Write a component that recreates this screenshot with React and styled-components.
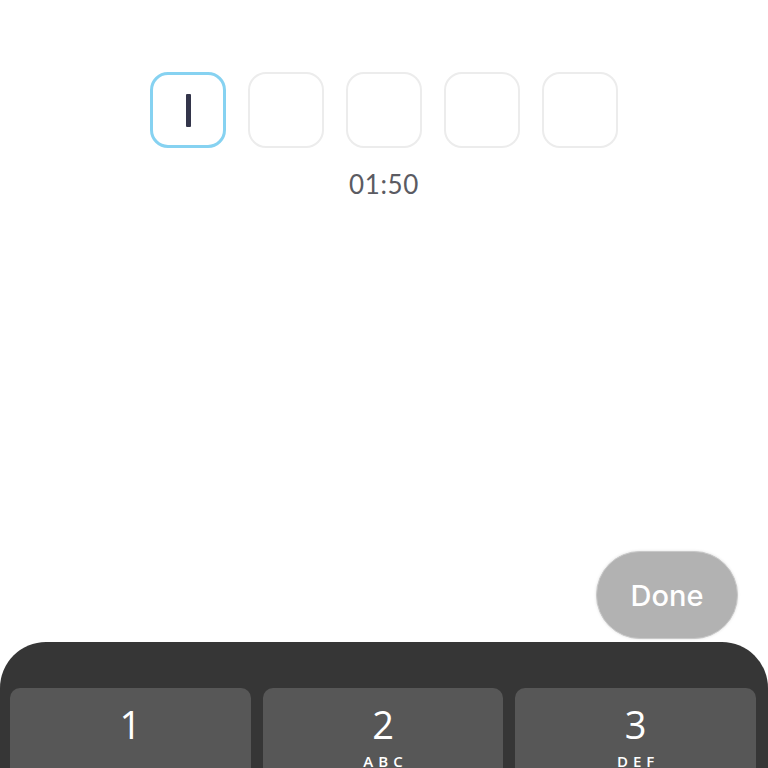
import React from 'react';
import styled, { createGlobalStyle } from 'styled-components';

const GlobalStyle = createGlobalStyle`
  html, body {
    margin: 0;
    padding: 0;
    background: #ffffff;
  }
  body {
    font-family: "Open Sans", "Liberation Sans", sans-serif;
  }
`;

const Screen = styled.div`
  width: 768px;
  height: 768px;
  overflow: hidden;
  display: flex;
  flex-direction: column;
  background: #ffffff;
`;

const CodeArea = styled.div`
  display: flex;
  flex-direction: column;
  align-items: center;
  padding-top: 72px;
  flex: 1;
`;

const CodeRow = styled.div`
  display: flex;
  gap: 22px;
`;

const CodeBox = styled.div`
  width: 76px;
  height: 76px;
  box-sizing: border-box;
  border-radius: 18px;
  border: ${p => (p.$active ? '3px solid #86d2f1' : '2.5px solid #ececec')};
  display: flex;
  align-items: center;
  justify-content: center;
`;

const Caret = styled.div`
  width: 5px;
  height: 33px;
  border-radius: 1px;
  background: #33354a;
`;

const Timer = styled.div`
  margin-top: 20px;
  font-family: "Lato", "Open Sans", sans-serif;
  font-size: 26px;
  color: #5b5b62;
  letter-spacing: 0.6px;
`;

const Accessory = styled.div`
  display: flex;
  justify-content: flex-end;
  padding: 0 30px 3px 0;
`;

const DoneButton = styled.button`
  width: 142px;
  height: 88px;
  border-radius: 44px;
  border: 1.5px solid #c8c8c8;
  background: #b2b2b2;
  color: #ffffff;
  font-family: "Inter", "Open Sans", sans-serif;
  font-size: 29px;
  font-weight: 500;
  padding: 0;
  box-shadow: 0 0 3px rgba(0, 0, 0, 0.12);
`;

const Keyboard = styled.div`
  height: 126px;
  background: #363636;
  border-radius: 46px 46px 0 0;
  padding: 46px 12px 0 10px;
  box-sizing: border-box;
  display: grid;
  grid-template-columns: repeat(3, 1fr);
  gap: 12px;
`;

const Key = styled.div`
  height: 100px;
  background: #575757;
  border-radius: 10px;
  display: flex;
  flex-direction: column;
  align-items: center;
  color: #ffffff;
`;

const Digit = styled.span`
  font-family: "Open Sans", "Liberation Sans", sans-serif;
  font-size: 38px;
  line-height: 1;
  margin-top: 17px;
`;

const Letters = styled.span`
  font-family: "Open Sans", "Liberation Sans", sans-serif;
  font-size: 15px;
  font-weight: 600;
  letter-spacing: 5px;
  margin-top: 8px;
  padding-left: 5px;
`;

const keys = [
  { d: '1', l: '' },
  { d: '2', l: 'ABC' },
  { d: '3', l: 'DEF' },
];

export default function App() {
  return (
    <Screen>
      <GlobalStyle />
      <CodeArea>
        <CodeRow>
          {[0, 1, 2, 3, 4].map(i => (
            <CodeBox key={i} $active={i === 0}>
              {i === 0 && <Caret />}
            </CodeBox>
          ))}
        </CodeRow>
        <Timer>01:50</Timer>
      </CodeArea>
      <Accessory>
        <DoneButton>Done</DoneButton>
      </Accessory>
      <Keyboard>
        {keys.map(k => (
          <Key key={k.d}>
            <Digit>{k.d}</Digit>
            {k.l && <Letters>{k.l}</Letters>}
          </Key>
        ))}
      </Keyboard>
    </Screen>
  );
}
